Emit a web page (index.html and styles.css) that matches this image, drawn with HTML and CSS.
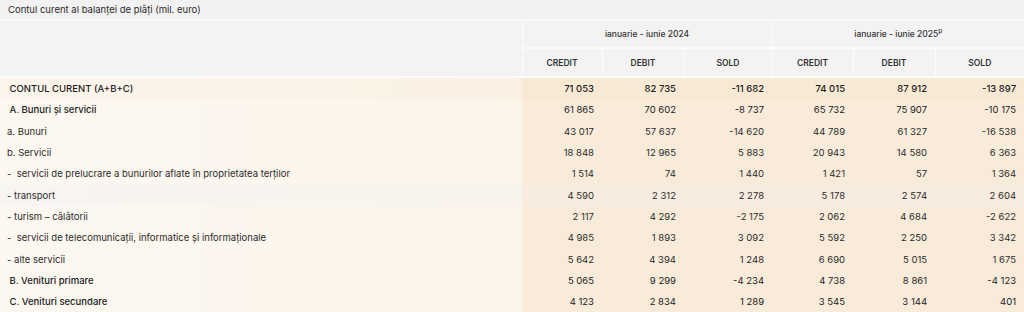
FILE: index.html
```html
<!DOCTYPE html>
<html lang="ro">
<head>
  <meta charset="UTF-8" />
  <title>Contul curent al balanței de plăți</title>
  <link rel="stylesheet" href="styles.css">
</head>
<body>
  <div class="caption">Contul curent al balanței de plăți (mil. euro)</div>
  <table class="bop">
    <colgroup>
      <col class="c-label">
      <col class="c1"><col class="c2"><col class="c3">
      <col class="c4"><col class="c5"><col class="c6">
    </colgroup>
    <thead>
      <tr class="group">
        <th class="blank" rowspan="2"></th>
        <th colspan="3">ianuarie - iunie 2024</th>
        <th colspan="3">ianuarie - iunie 2025<sup>p</sup></th>
      </tr>
      <tr class="sub">
        <th>CREDIT</th><th>DEBIT</th><th>SOLD</th>
        <th>CREDIT</th><th>DEBIT</th><th>SOLD</th>
      </tr>
    </thead>
    <tbody>
      <tr class="total">
        <td class="label">&nbsp;CONTUL CURENT (A+B+C)</td>
        <td>71 053</td><td>82 735</td><td>-11 682</td><td>74 015</td><td>87 912</td><td>-13 897</td>
      </tr>
      <tr class="section">
        <td class="label">&nbsp;A. Bunuri şi servicii</td>
        <td>61 865</td><td>70 602</td><td>-8 737</td><td>65 732</td><td>75 907</td><td>-10 175</td>
      </tr>
      <tr>
        <td class="label">a. Bunuri</td>
        <td>43 017</td><td>57 637</td><td>-14 620</td><td>44 789</td><td>61 327</td><td>-16 538</td>
      </tr>
      <tr>
        <td class="label">b. Servicii</td>
        <td>18 848</td><td>12 965</td><td>5 883</td><td>20 943</td><td>14 580</td><td>6 363</td>
      </tr>
      <tr>
        <td class="label">-&nbsp; servicii de prelucrare a bunurilor aflate în proprietatea terţilor</td>
        <td>1 514</td><td>74</td><td>1 440</td><td>1 421</td><td>57</td><td>1 364</td>
      </tr>
      <tr class="hover">
        <td class="label">- transport</td>
        <td>4 590</td><td>2 312</td><td>2 278</td><td>5 178</td><td>2 574</td><td>2 604</td>
      </tr>
      <tr>
        <td class="label">- turism – călătorii</td>
        <td>2 117</td><td>4 292</td><td>-2 175</td><td>2 062</td><td>4 684</td><td>-2 622</td>
      </tr>
      <tr>
        <td class="label">-&nbsp; servicii de telecomunicații, informatice și informaționale</td>
        <td>4 985</td><td>1 893</td><td>3 092</td><td>5 592</td><td>2 250</td><td>3 342</td>
      </tr>
      <tr>
        <td class="label">- alte servicii</td>
        <td>5 642</td><td>4 394</td><td>1 248</td><td>6 690</td><td>5 015</td><td>1 675</td>
      </tr>
      <tr class="section">
        <td class="label">&nbsp;B. Venituri primare</td>
        <td>5 065</td><td>9 299</td><td>-4 234</td><td>4 738</td><td>8 861</td><td>-4 123</td>
      </tr>
      <tr class="section">
        <td class="label">&nbsp;C. Venituri secundare</td>
        <td>4 123</td><td>2 834</td><td>1 289</td><td>3 545</td><td>3 144</td><td>401</td>
      </tr>
    </tbody>
  </table>
</body>
</html>
```

FILE: styles.css
```css
body {
  margin: 0;
  font-family: Inter, "Noto Sans", sans-serif;
  font-size: 9.5px;
  color: #2b2b2b;
  background: #ffffff;
}

.caption {
  height: 19px;
  line-height: 19px;
  padding-left: 8px;
  background-color: #f2f2f2;
  border-bottom: 2px solid #fafafa;
}

.bop {
  width: 1024px;
  border-collapse: collapse;
  table-layout: fixed;
}

.c-label { width: 522px; }
.c1 { width: 80px; }
.c2 { width: 82px; }
.c3 { width: 88px; }
.c4 { width: 81px; }
.c5 { width: 82px; }
.c6 { width: 89px; }

.bop thead th {
  background-color: #f3f3f3;
  font-weight: 600;
  font-size: 8.5px;
  color: #333;
  border-right: 1px solid #fdfdfd;
  padding: 0;
}

.bop thead th:last-child {
  border-right: none;
}

.bop .group th {
  height: 26px;
  font-weight: 500;
  border-bottom: 2px solid #fbfbfb;
}

.bop .group th.blank {
  border-bottom: 2px solid #fbfbfb;
}

.bop .sub th {
  height: 27px;
  border-bottom: 2px solid #fbfbfb;
}

.bop sup {
  font-size: 6.5px;
  vertical-align: 4px;
  line-height: 0;
}

.bop tbody td {
  height: 21.3px;
  padding: 0 8px 0 0;
  text-align: right;
  background-color: #f8ebda;
  white-space: nowrap;
}

.bop tbody td.label {
  text-align: left;
  padding-left: 7px;
  background: linear-gradient(90deg, #fcf8f1, #fbf4e9);
}

.bop tbody tr.total td {
  background-color: #f8e9d5;
  font-weight: 500;
}

.bop tbody tr.total td.label {
  background: linear-gradient(90deg, #fbf5ec, #faf1e3);
}

.bop tbody tr.section td.label {
  font-weight: 500;
}

.bop tbody tr.section td,
.bop tbody tr.total td {
  color: #222;
}

.bop tbody tr.hover td {
  background-color: #f7ecdf;
}

.bop tbody tr.hover td.label {
  background: linear-gradient(90deg, #f7f5f2, #f8f3ec);
}
```
